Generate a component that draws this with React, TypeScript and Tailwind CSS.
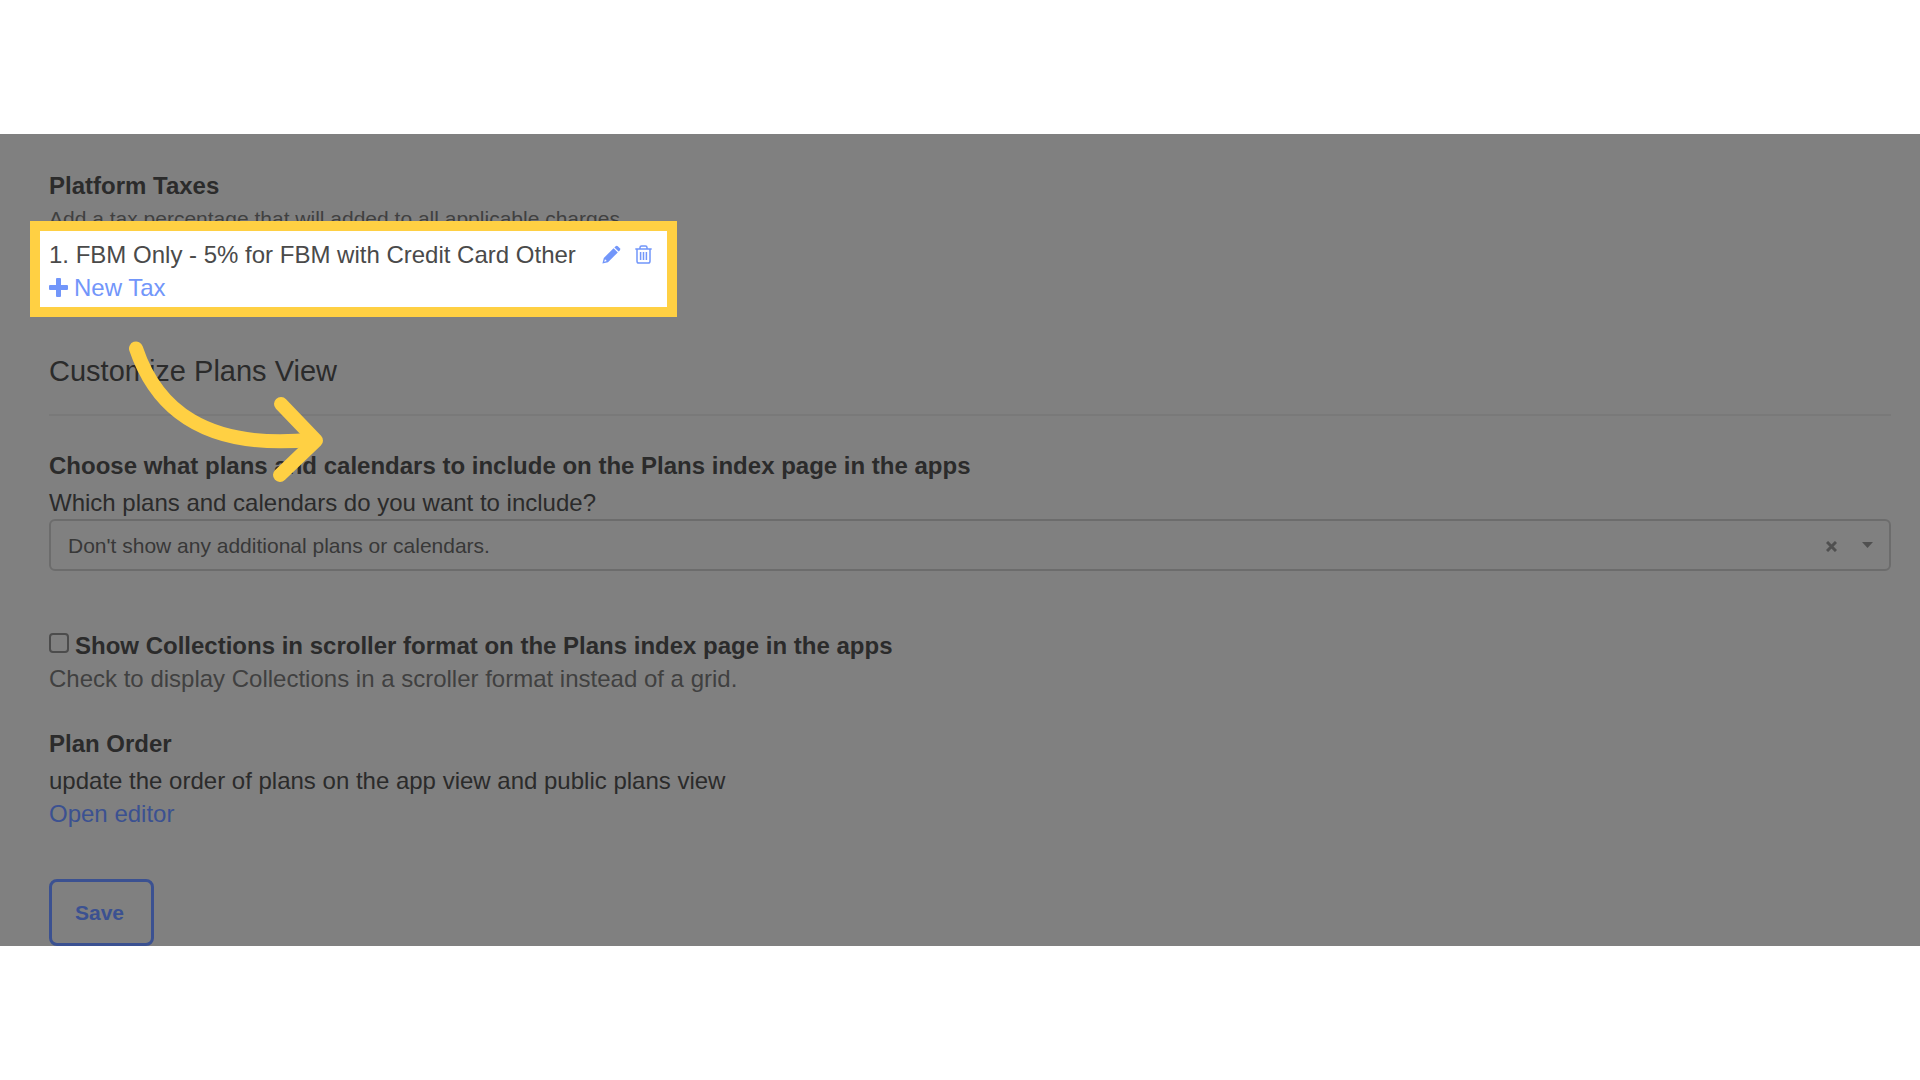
import { useState } from 'react'

const TAXES = [{ id: 1, label: 'FBM Only - 5% for FBM with Credit Card Other' }]

function PencilIcon() {
  return (
    <svg width="19" height="19" viewBox="0 0 19 19" fill="currentColor">
      <path d="M13.6 1.2a1.6 1.6 0 0 1 2.2 0l2 2a1.6 1.6 0 0 1 0 2.2l-1.2 1.2-4.2-4.2z" />
      <path fillRule="evenodd" d="M11.6 3.2l4.2 4.2L6 17.2 0.4 18.6 1.8 13zM3 14.2l-0.8 2.6 2.6-0.8z" />
    </svg>
  )
}

function TrashIcon() {
  return (
    <svg width="17" height="19" viewBox="0 0 17 19" fill="none" stroke="currentColor" strokeWidth="1.5">
      <path d="M0.3 4h16.4M5 4V2.6Q5 1 6.6 1h3.8Q12 1 12 2.6V4M2 4v12.2q0 1.8 1.8 1.8h9.4q1.8 0 1.8-1.8V4M5.6 7v8M8.5 7v8M11.4 7v8" />
    </svg>
  )
}

function PlusIcon() {
  return (
    <svg width="19" height="19" viewBox="0 0 19 19" fill="currentColor">
      <path d="M7 1q0-1 1-1h3q1 0 1 1v6h6q1 0 1 1v3q0 1-1 1h-6v6q0 1-1 1H8q-1 0-1-1v-6H1q-1 0-1-1V8q0-1 1-1h6z" />
    </svg>
  )
}

function GuideArrow() {
  return (
    <svg
      className="absolute left-[127px] top-[206px] z-30 pointer-events-none"
      width="200"
      height="145"
      viewBox="0 0 200 145"
      fill="none"
      stroke="#ffd043"
      strokeWidth="14"
      strokeLinecap="round"
      strokeLinejoin="round"
    >
      <path d="M9 8.5C29 68 77 111 187 99.5" />
      <path d="M154 64L189 100.5L153 135" />
    </svg>
  )
}

function TaxList() {
  return (
    <div className="relative -mt-[14px] -ml-[19px] w-[647px] max-w-full h-24 bg-white pl-[19px] pt-[17px] text-[#4a4a4a]">
      <ol>
        {TAXES.map((tax) => (
          <li key={tax.id} className="flex items-center">
            <span>
              {tax.id}. {tax.label}
            </span>
            <button type="button" aria-label="Edit tax" className="ml-[26px] text-[#7296fa]">
              <PencilIcon />
            </button>
            <button type="button" aria-label="Delete tax" className="ml-[14px] text-[#7296fa]">
              <TrashIcon />
            </button>
          </li>
        ))}
      </ol>
      <a href="#new-tax" className="inline-flex items-center gap-1.5 text-[#7296fa]">
        <PlusIcon />
        New Tax
      </a>
      <div className="absolute inset-0 z-20 border-[10px] border-[#ffd043] pointer-events-none" />
    </div>
  )
}

export default function App() {
  const [scroller, setScroller] = useState(false)

  return (
    <main className="min-h-screen bg-white py-[134px] font-['Liberation_Sans',Arial,sans-serif]">
      <form
        className="relative overflow-hidden bg-[#808080] pl-[49px] pr-[29px] pt-[35px] text-[24px] leading-[33px] text-[#2b2b2b]"
        onSubmit={(e) => e.preventDefault()}
      >
        <h3 className="font-bold">Platform Taxes</h3>
        <p className="relative z-10 text-[21px] text-[#404040]">
          Add a tax percentage that will added to all applicable charges.
        </p>
        <TaxList />

        <h2 className="mt-9 text-[29px] leading-[36px]">Customize Plans View</h2>
        <hr className="mt-[25px] border-t-2 border-[#797979]" />

        <h3 className="mt-[33px] font-bold">Choose what plans and calendars to include on the Plans index page in the apps</h3>
        <label htmlFor="plans" className="block mt-1">
          Which plans and calendars do you want to include?
        </label>
        <div className="relative">
          <select
            id="plans"
            className="block w-full h-[52px] appearance-none rounded-md border-2 border-[#6c6c6c] bg-transparent pl-[17px] text-[21px] text-[#383838]"
          >
            <option>Don't show any additional plans or calendars.</option>
          </select>
          <button type="button" aria-label="Clear" className="absolute right-[54px] top-[22px] text-[#505050]">
            <svg width="11" height="11" viewBox="0 0 11 11" stroke="currentColor" strokeWidth="3">
              <path d="M1 1l9 9M10 1l-9 9" />
            </svg>
          </button>
          <svg className="absolute right-[18px] top-[23px] pointer-events-none" width="11" height="6" viewBox="0 0 11 6" fill="#505050">
            <path d="M0 0h11L5.5 6z" />
          </svg>
        </div>

        <div className="mt-[58px] flex items-start gap-1.5">
          <input
            id="scroller"
            type="checkbox"
            checked={scroller}
            onChange={(e) => setScroller(e.target.checked)}
            className="mt-1 size-5 appearance-none rounded-[4px] border-2 border-[#4c4c4c] checked:bg-[#3c56a0]"
          />
          <label htmlFor="scroller" className="font-bold">
            Show Collections in scroller format on the Plans index page in the apps
          </label>
        </div>
        <p className="text-[#404040]">Check to display Collections in a scroller format instead of a grid.</p>

        <h3 className="mt-8 font-bold">Plan Order</h3>
        <p className="mt-1">update the order of plans on the app view and public plans view</p>
        <a href="#editor" className="text-[#3b5191]">
          Open editor
        </a>

        <div className="mt-[49px]">
          <button type="submit" className="block h-[67px] w-[105px] rounded-lg border-[3px] border-[#3b5191] pr-1 text-[21px] font-bold text-[#3b5191]">
            Save
          </button>
        </div>
        <GuideArrow />
      </form>
    </main>
  )
}
